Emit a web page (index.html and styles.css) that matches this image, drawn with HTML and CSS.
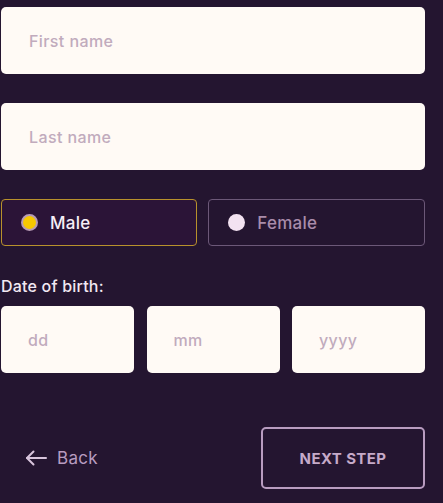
FILE: index.html
```html
<!DOCTYPE html>
<html lang="en">
<head>
    <meta charset="UTF-8">
    <meta name="viewport" content="width=device-width, initial-scale=1.0">
    <title>Personal details</title>
    <link rel="stylesheet" href="styles.css">
</head>
<body>
    <form class="form">
        <input type="text" class="field" placeholder="First name">
        <input type="text" class="field field-last" placeholder="Last name">

        <div class="gender">
            <label class="option selected">
                <span class="dot"></span>
                Male
            </label>
            <label class="option">
                <span class="dot"></span>
                Female
            </label>
        </div>

        <div class="label">Date of birth:</div>
        <div class="dob">
            <input type="text" class="field small" placeholder="dd">
            <input type="text" class="field small" placeholder="mm">
            <input type="text" class="field small" placeholder="yyyy">
        </div>

        <div class="actions">
            <a class="back" href="#">
                <svg width="22" height="16" viewBox="0 0 22 16" fill="none" stroke="currentColor" stroke-width="2" stroke-linecap="round" stroke-linejoin="round">
                    <path d="M21 8H2"/>
                    <path d="M8.5 1.5L2 8l6.5 6.5"/>
                </svg>
                Back
            </a>
            <button type="button" class="next">NEXT STEP</button>
        </div>
    </form>
</body>
</html>
```

FILE: styles.css
```css
:root {
    --bg: #241530;
    --card: #fffaf5;
    --hint: #c1abbd;
    --gold: #b8912c;
    --muted: #6c5878;
    --light: #f2e8f2;
    --lilac: #b89cc0;
}

* {
    box-sizing: border-box;
}

body {
    margin: 0;
    background-color: var(--bg);
    font-family: Inter, 'Noto Sans', sans-serif;
    color: var(--light);
}

.form {
    width: 424px;
    margin-left: 1px;
    padding-top: 7px;
    display: flex;
    flex-direction: column;
}

.field {
    height: 67px;
    width: 100%;
    min-width: 0;
    border: none;
    border-radius: 5px;
    background-color: var(--card);
    padding: 0 28px;
    font-family: inherit;
    font-size: 16px;
    font-weight: 500;
    letter-spacing: 0.4px;
    color: #3a2a40;
    outline: none;
}

.field::placeholder {
    color: var(--hint);
}

.field-last {
    margin-top: 29px;
}

.gender {
    margin-top: 29px;
    display: flex;
    gap: 11px;
}

.option {
    height: 47px;
    border: 1px solid var(--muted);
    border-radius: 4px;
    display: flex;
    align-items: center;
    gap: 12px;
    padding-left: 19px;
    font-size: 17px;
    font-weight: 500;
    letter-spacing: 0.3px;
    color: #a98caa;
    flex: 218;
}

.option.selected {
    flex: 195;
    border-color: var(--gold);
    background-color: #2b1437;
    color: #f6eef6;
}

.dot {
    width: 17px;
    height: 17px;
    border-radius: 50%;
    background-color: #f3e2f1;
}

.selected .dot {
    background-color: #f7c900;
    border: 2px solid #b79bb5;
}

.label {
    margin-top: 30px;
    font-size: 16px;
    font-weight: 500;
    line-height: 20px;
    letter-spacing: 0.2px;
}

.dob {
    margin-top: 10px;
    display: flex;
    gap: 12.5px;
}

.field.small {
    flex: 1;
    height: 67px;
    padding-left: 27px;
}

.actions {
    margin-top: 54px;
    display: flex;
    align-items: center;
    justify-content: space-between;
}

.back {
    display: flex;
    align-items: center;
    gap: 10px;
    padding-left: 24px;
    color: var(--lilac);
    text-decoration: none;
    font-size: 17px;
    letter-spacing: 0.3px;
}

.back svg {
    color: #d8c4dc;
}

.next {
    width: 164px;
    height: 62px;
    background: transparent;
    border: 2px solid var(--lilac);
    border-radius: 5px;
    color: #c6aac9;
    font-family: inherit;
    font-size: 15px;
    font-weight: 700;
    letter-spacing: 0.4px;
    cursor: pointer;
}
```
